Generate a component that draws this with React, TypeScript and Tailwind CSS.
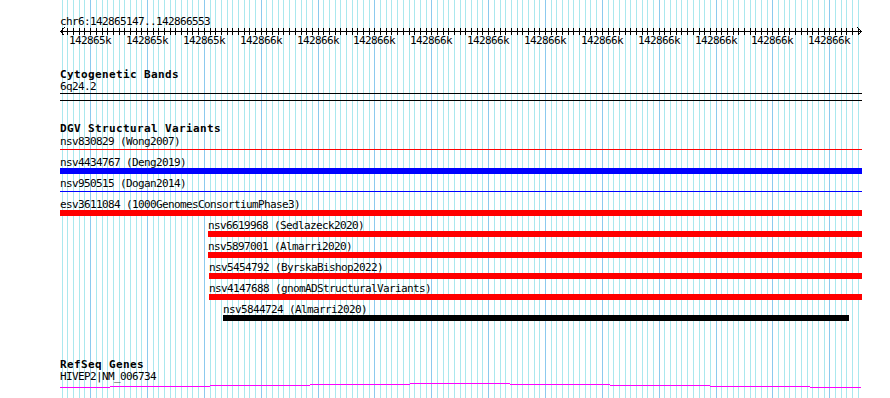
import type { ReactNode } from "react";

// genome window shown in the image
const START = 142865147;
const END = 142866553;
const LEFT = 60;
const SCALE = 800 / (END - START + 1);
const toX = (bp: number) => LEFT + (bp - START) * SCALE;

const minor: number[] = [];
for (let bp = 142865150; bp <= END; bp += 10) minor.push(Math.round(toX(bp)));
const major: { x: number; label: string }[] = [];
for (let bp = 142865200; bp <= END; bp += 100)
  major.push({ x: Math.round(toX(bp)), label: bp < 142865500 ? "142865k" : "142866k" });

type Variant = {
  label: string;
  start: number;
  end: number;
  color: "red" | "blue" | "black";
  thin?: boolean;
};

const variants: Variant[] = [
  { label: "nsv830829 (Wong2007)", start: 60, end: 862, color: "red", thin: true },
  { label: "nsv4434767 (Deng2019)", start: 60, end: 862, color: "blue" },
  { label: "nsv950515 (Dogan2014)", start: 60, end: 862, color: "blue", thin: true },
  { label: "esv3611084 (1000GenomesConsortiumPhase3)", start: 60, end: 862, color: "red" },
  { label: "nsv6619968 (Sedlazeck2020)", start: 208, end: 862, color: "red" },
  { label: "nsv5897001 (Almarri2020)", start: 208, end: 862, color: "red" },
  { label: "nsv5454792 (ByrskaBishop2022)", start: 209, end: 862, color: "red" },
  { label: "nsv4147688 (gnomADStructuralVariants)", start: 209, end: 862, color: "red" },
  { label: "nsv5844724 (Almarri2020)", start: 223, end: 849, color: "black" },
];

const barColor = {
  red: "bg-[#ff0000]",
  blue: "bg-[#0000ff]",
  black: "bg-black",
};

function Label({ children, className = "" }: { children: ReactNode; className?: string }) {
  return (
    <div className={`h-[10px] leading-[10px] text-[11px] tracking-[-0.62px] whitespace-nowrap ${className}`}>
      {children}
    </div>
  );
}

function Heading({ children }: { children: ReactNode }) {
  return (
    <div className="ml-[60px] h-[10px] leading-[10px] text-[11px] font-bold tracking-[0.38px] whitespace-nowrap">
      {children}
    </div>
  );
}

function Guidelines() {
  return (
    <svg className="absolute inset-0" width={890} height={398} shapeRendering="crispEdges">
      {minor.map((x) => (
        <rect key={x} x={x} y={0} width={1} height={398} fill="#aae8ee" />
      ))}
      {major.map((m) => (
        <rect key={m.x} x={m.x} y={0} width={1} height={398} fill="#8ccaee" />
      ))}
    </svg>
  );
}

function Ruler() {
  return (
    <svg width={890} height={20} shapeRendering="crispEdges" className="block">
      <rect x={60} y={4} width={802} height={1} fill="#000" />
      {minor.map((x) => (
        <rect key={x} x={x} y={1} width={1} height={7} fill="#000" />
      ))}
      <path d="M64.5 0.5 L60.5 4.5 L64.5 8.5" stroke="#000" fill="none" />
      <path d="M857.5 0.5 L861.5 4.5 L857.5 8.5" stroke="#000" fill="none" />
      {major.map((m) => (
        <text
          key={m.x}
          x={m.x}
          y={17}
          textAnchor="middle"
          fontFamily="'DejaVu Sans Mono', monospace"
          fontSize={11}
          letterSpacing={-0.62}
          fill="#000"
        >
          {m.label}
        </text>
      ))}
    </svg>
  );
}

function GeneLine() {
  // intron line of HIVEP2, drawn in 100px steps
  const steps = [
    [60, 110, 5],
    [110, 210, 4],
    [210, 310, 3],
    [310, 410, 2],
    [410, 510, 1],
    [510, 610, 2],
    [610, 710, 3],
    [710, 810, 4],
    [810, 861, 5],
  ];
  return (
    <svg width={890} height={6} shapeRendering="crispEdges" className="block">
      {steps.map(([a, b, y]) => (
        <rect key={a} x={a} y={y} width={b - a} height={1} fill="#ff00ff" />
      ))}
    </svg>
  );
}

export default function App() {
  return (
    <div className="relative w-[890px] h-[398px] overflow-hidden bg-white text-black font-['DejaVu_Sans_Mono',monospace]">
      <Guidelines />
      <div className="relative flex flex-col pt-[17px]">
        <Label className="ml-[60px]">chr6:142865147..142866553</Label>
        <Ruler />

        <div className="mt-[23px]">
          <Heading>Cytogenetic Bands</Heading>
          <Label className="ml-[60px] mt-[2px]">6q24.2</Label>
          <div className="ml-[60px] mt-[1px] h-px w-[802px] bg-black" />
          <div className="ml-[60px] mt-[6px] h-px w-[802px] bg-black" />
        </div>

        <div className="mt-[23px]">
          <Heading>DGV Structural Variants</Heading>
          <div className="mt-[3px] flex flex-col">
            {variants.map((v) => (
              <div key={v.label} className="h-[21px]" style={{ paddingLeft: v.start }}>
                <Label>{v.label}</Label>
                <div className="h-[6px] flex flex-col" style={{ width: v.end - v.start }}>
                  {v.thin ? (
                    <div className={`mt-[2px] h-px ${barColor[v.color]}`} />
                  ) : (
                    <div className={`h-[6px] ${barColor[v.color]}`} />
                  )}
                </div>
              </div>
            ))}
          </div>
        </div>

        <div className="mt-[34px]">
          <Heading>RefSeq Genes</Heading>
          <Label className="ml-[60px] mt-[2px]">HIVEP2|NM_006734</Label>
          <GeneLine />
        </div>
      </div>
    </div>
  );
}
